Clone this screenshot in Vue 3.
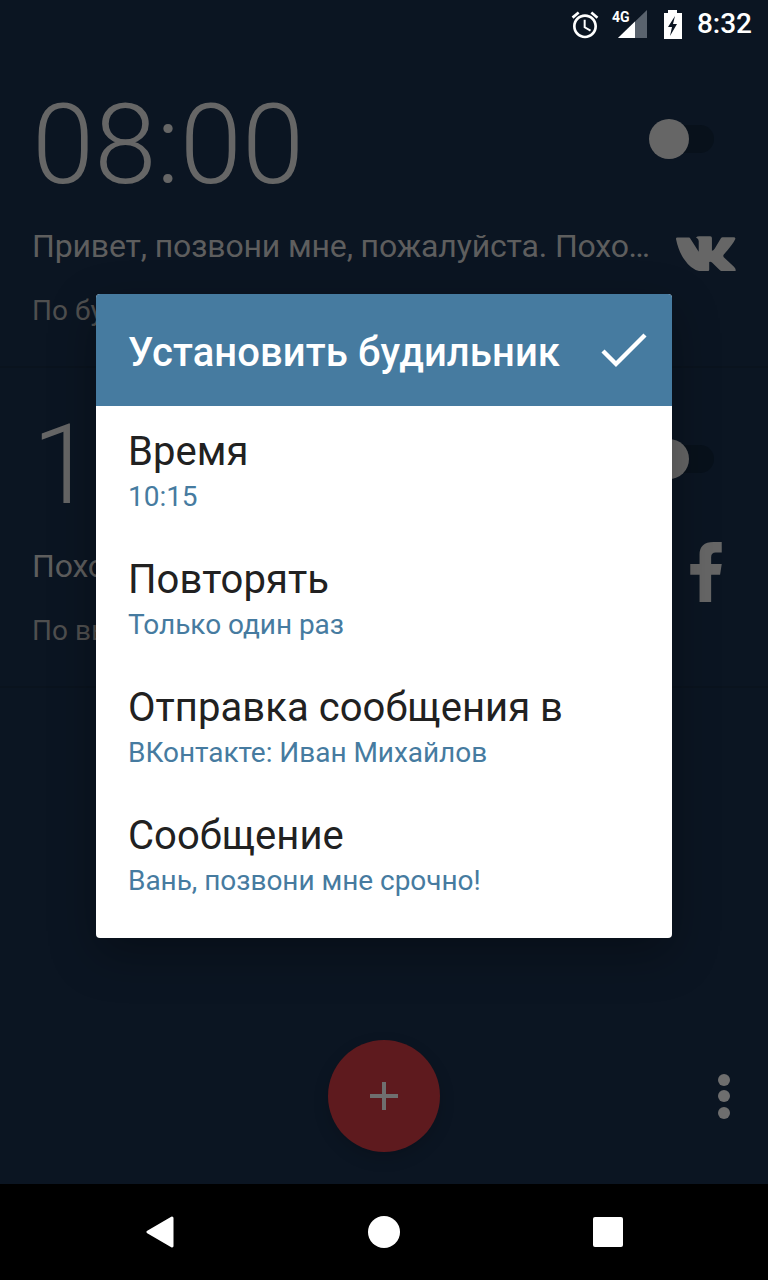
<template>
  <div class="phone">
    <div class="status-bar">
      <svg class="alarm-icon" viewBox="0 0 24 24">
        <path
          d="M22 5.72l-4.6-3.86-1.29 1.53 4.6 3.86L22 5.72zM7.88 3.39L6.6 1.86 2 5.71l1.29 1.53 4.59-3.85zM12.5 8H11v6l4.75 2.85.75-1.23-4-2.37V8zM12 4c-4.97 0-9 4.03-9 9s4.02 9 9 9c4.97 0 9-4.03 9-9s-4.03-9-9-9zm0 16c-3.87 0-7-3.13-7-7s3.13-7 7-7 7 3.13 7 7-3.13 7-7 7z"
        />
      </svg>
      <div class="signal">
        <span class="net-label">4G</span>
        <svg class="signal-icon" viewBox="0 0 29 28">
          <path d="M0 28L29 0v28z" fill="#5a636e" />
          <path d="M0 28L17 11.6V28z" fill="#fff" />
        </svg>
      </div>
      <svg class="battery-icon" viewBox="0 0 18 29">
        <path d="M4 0h9v3h5v26H0V3h4z" fill="#fff" />
        <path d="M11 6L4 17h4l-2 9 7-12H9z" fill="#0b1522" />
      </svg>
      <span class="clock">8:32</span>
    </div>

    <div class="content">
      <div v-for="alarm in alarms" :key="alarm.time" class="alarm">
        <div class="alarm-top">
          <span class="alarm-time">{{ alarm.time }}</span>
          <div class="switch"><span class="switch-thumb"></span></div>
        </div>
        <div class="alarm-mid">
          <span class="alarm-msg">{{ alarm.message }}</span>
          <svg v-if="alarm.net === 'vk'" class="vk-icon" viewBox="168 405 177 102">
            <path
              d="M168 412q0-3 4-3h34q3 0 5 4l24 38V419q0-6-8-10q3-4 10-4h32q5 0 5 5v38q4 0 8-6l18-30q2-4 6-4h32q6 0 5 5q-6 14-34 46q-3 4 0 8l30 28q6 7 5 11q0 3-5 3h-34q-5 0-12-8l-18-18q-5-4-9-2v22q0 6-8 6h-10q-32 0-56-36q-16-22-24-60z"
            />
          </svg>
          <svg v-else class="fb-icon" viewBox="150 366 95 181">
            <path
              d="M150 432h28v-28q0-38 42-38h25v32h-18q-14 0-14 14v20h32l-5 33h-27v82h-35v-82h-28z"
            />
          </svg>
        </div>
        <div class="alarm-days">{{ alarm.days }}</div>
      </div>

      <div class="footer">
        <span></span>
        <button class="fab">
          <span class="fab-plus"></span>
        </button>
        <div class="more">
          <span></span>
          <span></span>
          <span></span>
        </div>
      </div>
    </div>

    <div class="nav-bar">
      <div class="nav-item">
        <svg class="nav-back" viewBox="0 0 28 32">
          <path
            d="M26 2L2 16l24 14z"
            fill="#fff"
            stroke="#fff"
            stroke-width="3"
            stroke-linejoin="round"
          />
        </svg>
      </div>
      <div class="nav-item"><span class="nav-home"></span></div>
      <div class="nav-item"><span class="nav-recent"></span></div>
    </div>

    <div class="dialog">
      <div class="dialog-head">
        <span class="dialog-title">Установить будильник</span>
        <svg class="check-icon" viewBox="0 0 46 36">
          <path d="M2 19l13 13L44 3" fill="none" stroke="#fff" stroke-width="4.4" />
        </svg>
      </div>
      <div class="dialog-body">
        <div v-for="item in settings" :key="item.label" class="setting">
          <div class="setting-label">{{ item.label }}</div>
          <div class="setting-value">{{ item.value }}</div>
        </div>
      </div>
    </div>
  </div>
</template>

<script setup>
const alarms = [
  {
    time: "08:00",
    message: "Привет, позвони мне, пожалуйста. Похоже, я проспал",
    days: "По будням",
    net: "vk",
  },
  {
    time: "10:15",
    message: "Поход в кино отменяется, увидимся завтра",
    days: "По выходным",
    net: "fb",
  },
];

const settings = [
  { label: "Время", value: "10:15" },
  { label: "Повторять", value: "Только один раз" },
  { label: "Отправка сообщения в", value: "ВКонтакте: Иван Михайлов" },
  { label: "Сообщение", value: "Вань, позвони мне срочно!" },
];
</script>

<style>
html,
body {
  margin: 0;
  background: #000;
}
</style>

<style scoped>
.phone {
  position: relative;
  width: 768px;
  height: 1280px;
  display: flex;
  flex-direction: column;
  overflow: hidden;
  background: #0b1522;
  font-family: Roboto, "Noto Sans", sans-serif;
}

/* статус бар */
.status-bar {
  height: 48px;
  flex: none;
  display: flex;
  align-items: center;
  padding-right: 16px;
  justify-content: flex-end;
  box-sizing: border-box;
}
.alarm-icon {
  width: 32px;
  height: 32px;
  fill: #fff;
  margin-right: 10px;
  margin-top: 1px;
}
.signal {
  position: relative;
  width: 36px;
  height: 28px;
  margin-right: 17px;
}
.net-label {
  position: absolute;
  left: 1px;
  top: -1px;
  color: #fff;
  font-size: 14px;
  font-weight: 700;
  line-height: 16px;
}
.signal-icon {
  position: absolute;
  right: 0;
  top: 0;
  width: 29px;
  height: 28px;
}
.battery-icon {
  width: 18px;
  height: 29px;
  margin-right: 15px;
}
.clock {
  color: #fff;
  font-size: 28px;
  font-weight: 500;
  line-height: 48px;
}

/* будильники */
.content {
  flex: 1;
  display: flex;
  flex-direction: column;
}
.alarm {
  height: 320px;
  flex: none;
  box-sizing: border-box;
  padding: 34px 32px 0 32px;
  border-bottom: 2px solid #0a131e;
}
.alarm-top {
  display: flex;
  justify-content: space-between;
  align-items: center;
  height: 114px;
  padding-right: 22px;
}
.alarm-time {
  color: #666;
  font-size: 112px;
  font-weight: 300;
  line-height: 114px;
  align-self: flex-start;
  margin-top: 6px;
}
.switch {
  position: relative;
  width: 56px;
  height: 28px;
  border-radius: 14px;
  background: #08111b;
}
.switch-thumb {
  position: absolute;
  left: -9px;
  top: -6px;
  width: 40px;
  height: 40px;
  border-radius: 50%;
  background: #666;
}
.alarm-mid {
  display: flex;
  align-items: center;
  justify-content: space-between;
  height: 52px;
  margin-top: 24px;
}
.alarm-msg {
  width: 618px;
  color: #5e5e5e;
  font-size: 32px;
  letter-spacing: -0.15px;
  line-height: 52px;
  white-space: nowrap;
  overflow: hidden;
  text-overflow: ellipsis;
}
.vk-icon {
  width: 60px;
  height: 35px;
  fill: #666;
  margin-right: 0;
  margin-top: 14px;
}
.fb-icon {
  width: 32px;
  height: 60px;
  fill: #666;
  margin-right: 14px;
  margin-top: 12px;
}
.alarm-days {
  margin-top: 21px;
  color: #4f4f4f;
  font-size: 28px;
  line-height: 36px;
}

/* низ */
.footer {
  margin-top: auto;
  padding-bottom: 32px;
  display: grid;
  grid-template-columns: 1fr auto 1fr;
  align-items: center;
}
.fab {
  width: 112px;
  height: 112px;
  border: none;
  padding: 0;
  border-radius: 50%;
  background: #5e1a1e;
  box-shadow: 0 6px 16px rgba(0, 0, 0, 0.16);
  position: relative;
}
.fab-plus {
  position: absolute;
  left: 42px;
  top: 42px;
  width: 28px;
  height: 28px;
  background:
    linear-gradient(#6f6f6f, #6f6f6f) center / 28px 4px no-repeat,
    linear-gradient(#6f6f6f, #6f6f6f) center / 4px 28px no-repeat;
}
.more {
  justify-self: end;
  display: flex;
  flex-direction: column;
  gap: 4.5px;
  padding-right: 38px;
}
.more span {
  width: 12px;
  height: 12px;
  border-radius: 50%;
  background: #6e6e6e;
}

.nav-bar {
  height: 96px;
  flex: none;
  background: #000;
  display: flex;
  justify-content: center;
  align-items: center;
}
.nav-item {
  width: 224px;
  display: flex;
  justify-content: center;
  align-items: center;
}
.nav-back {
  width: 28px;
  height: 32px;
}
.nav-home {
  width: 32px;
  height: 32px;
  border-radius: 50%;
  background: #fff;
}
.nav-recent {
  width: 30px;
  height: 30px;
  border-radius: 2px;
  background: #fff;
}

/* диалог */
.dialog {
  position: absolute;
  left: 96px;
  top: 294px;
  width: 576px;
  height: 644px;
  border-radius: 4px;
  overflow: hidden;
  background: #fff;
  box-shadow: 0 16px 48px rgba(0, 0, 0, 0.3);
}
.dialog-head {
  height: 112px;
  background: #467ba0;
  display: flex;
  align-items: center;
  justify-content: space-between;
  padding: 4px 25px 0 32px;
  box-sizing: border-box;
}
.dialog-title {
  color: #fff;
  font-size: 40px;
  font-weight: 500;
  letter-spacing: 0.1px;
}
.check-icon {
  width: 46px;
  height: 36px;
  margin-top: -4px;
}
.dialog-body {
  padding-top: 24px;
}
.setting {
  height: 128px;
  padding-left: 32px;
  box-sizing: border-box;
}
.setting-label {
  color: #212121;
  font-size: 40px;
  letter-spacing: 0.05px;
  line-height: 44px;
}
.setting-value {
  color: #467ba0;
  font-size: 28px;
  letter-spacing: -0.04px;
  line-height: 46px;
}
</style>
